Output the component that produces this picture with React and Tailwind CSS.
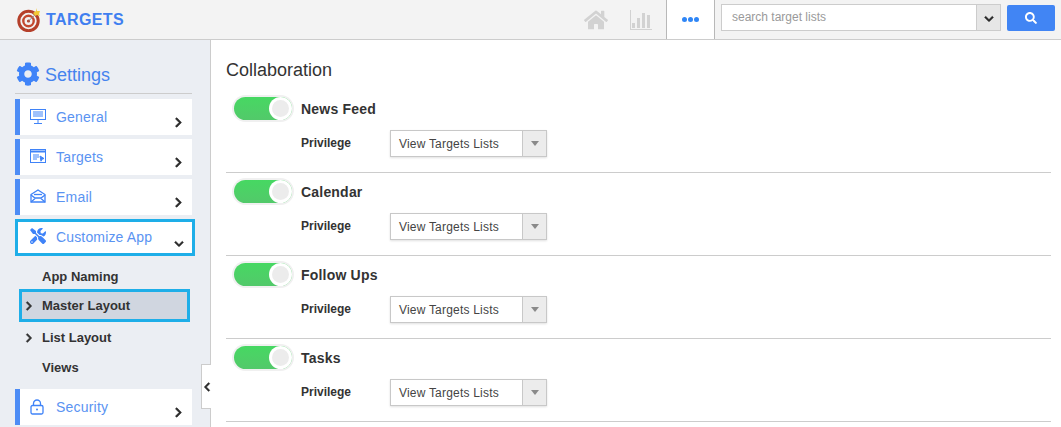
import { FaChevronRight, FaChevronDown, FaChevronLeft, FaCog, FaHome, FaTools, FaSearch } from 'react-icons/fa'

const FONT = 'font-["Liberation_Sans",Arial,sans-serif]'

function TargetLogo() {
  return (
    <svg width="24" height="24" viewBox="0 0 24 24" className="shrink-0">
      <circle cx="11.5" cy="13" r="9.7" fill="none" stroke="#b5402a" strokeWidth="3" />
      <circle cx="11.5" cy="13" r="5.2" fill="none" stroke="#c4492f" strokeWidth="2.4" />
      <circle cx="11.5" cy="13" r="1.6" fill="#b5402a" />
      <path d="M11.5 13 L20 5" stroke="#8a8a8a" strokeWidth="1" />
      <path d="M19 0 l1 3 3 0 -1 3 1 2 -3 -1 -2 1 -1 -2 -1 -1 3 -2z" fill="#f2c936" />
    </svg>
  )
}

function BarsIcon() {
  return (
    <svg width="22" height="20" viewBox="0 0 22 20" fill="#d2d2d2">
      <path d="M0 0h1v19h21v1H0z" />
      <rect x="2" y="13" width="3" height="5" />
      <rect x="7" y="8" width="3" height="10" />
      <rect x="12" y="3" width="3" height="15" />
      <rect x="17" y="5" width="3" height="13" />
    </svg>
  )
}

function MonitorIcon() {
  return (
    <svg width="16" height="16" viewBox="0 0 16 16" fill="none" stroke="#3f83f8">
      <rect x="0.5" y="0.5" width="15" height="10" />
      <path d="M3 3h10M3 5h10M3 7h10M8 11v3M4 14.5h8" />
    </svg>
  )
}

function TargetsIcon() {
  return (
    <svg width="16" height="14" viewBox="0 0 16 14" fill="none" stroke="#3f83f8">
      <rect x="0.5" y="0.5" width="15" height="13" />
      <path d="M0 2.5h16" strokeWidth="2" />
      <path d="M3 6h6M3 8h6M3 10h4" />
      <path d="M10 7l4 2.5-2 .7-1 2z" fill="#3f83f8" />
    </svg>
  )
}

function EnvelopeIcon() {
  return (
    <svg width="16" height="14" viewBox="0 0 16 14" fill="none" stroke="#3f83f8" strokeWidth="1.3">
      <path d="M1 5.5L8 1l7 4.5v7.5H1z" />
      <path d="M1 6l4 3h6l4-3M1 13l4-3.5M15 13l-4-3.5" />
      <path d="M4 5.5h8" />
    </svg>
  )
}

function LockIcon() {
  return (
    <svg width="14" height="16" viewBox="0 0 14 16" fill="none" stroke="#3f83f8" strokeWidth="1.3">
      <rect x="1" y="6.5" width="12" height="8.5" rx="1.5" />
      <path d="M3.5 6.5V4.5a3.5 3.5 0 0 1 7 0v2" />
      <circle cx="7" cy="10.5" r="1" fill="#3f83f8" stroke="none" />
    </svg>
  )
}

function SideCard({ icon, label }) {
  return (
    <div className="flex h-[36px] w-[177px] border-l-[5px] border-[#4d8cf5] bg-white pl-[10px]">
      <div className="flex w-[26px] justify-start pt-[10px]">{icon}</div>
      <span className="pt-[9px] text-[14px] leading-[18px] tracking-[0.2px] text-[#5a93f2]">{label}</span>
      <FaChevronRight size={11} stroke="currentColor" strokeWidth={30} className="ml-auto mr-[8px] mt-[18px] text-[#2b2b2b]" />
    </div>
  )
}

function Toggle() {
  return (
    <div className="flex h-[27px] w-[62px] items-center rounded-full bg-[#f0f0f0] p-[2px]">
      <div className="flex h-[23px] w-[58px] items-center justify-end rounded-full bg-gradient-to-b from-[#46d862] to-[#52c96a]">
        <div className="flex h-[23px] w-[23px] items-center justify-center rounded-full bg-white">
          <div className="h-[17px] w-[17px] rounded-full bg-[#ececec]" />
        </div>
      </div>
    </div>
  )
}

function Row({ title }) {
  return (
    <div className="h-[83px] w-[825px] border-b border-[#cccccc] pl-[6px]">
      <div className="flex items-center pt-[5px]">
        <Toggle />
        <span className="ml-[7px] pt-[2px] text-[14px] font-bold tracking-[0.2px] text-[#333333]">{title}</span>
      </div>
      <div className="mt-[8px] flex items-center">
        <span className="ml-[69px] w-[89px] pb-[2px] text-[12px] font-bold text-[#333333]">Privilege</span>
        <div className="flex h-[27px] w-[157px] border border-[#c8c8c8] bg-white shadow-[0_1px_2px_rgba(0,0,0,0.12)]">
          <span className="flex-1 pl-[8px] text-[12px] leading-[26px] tracking-[0.2px] text-[#444444]">View Targets Lists</span>
          <div className="flex w-[24px] items-center justify-center border-l border-[#c8c8c8] bg-[#ececec]">
            <div className="h-0 w-0 border-x-[4px] border-t-[5px] border-x-transparent border-t-[#8a8a8a]" />
          </div>
        </div>
      </div>
    </div>
  )
}

export default function App() {
  return (
    <div className={`h-[427px] w-[1061px] overflow-hidden bg-white ${FONT}`}>
      <header className="flex h-[40px] items-center border-b border-[#cccccc] bg-[#f3f3f3]">
        <div className="flex items-center pl-[17px]">
          <TargetLogo />
          <span className="ml-[5px] text-[16px] font-bold tracking-[0.4px] text-[#3f7ff0]">TARGETS</span>
        </div>
        <div className="ml-auto flex h-full items-center">
          <FaHome size={24} className="text-[#d2d2d2]" />
          <div className="ml-[22px] mr-[14px]"><BarsIcon /></div>
          <div className="flex h-full w-[49px] items-center justify-center gap-[1px] border-x border-[#b8b8b8] bg-white">
            <i className="h-[5px] w-[5px] rounded-full bg-[#2f86f6]" />
            <i className="h-[5px] w-[5px] rounded-full bg-[#2f86f6]" />
            <i className="h-[5px] w-[5px] rounded-full bg-[#2f86f6]" />
          </div>
          <div className="mb-[4px] ml-[6px] flex h-[27px] w-[280px] border border-[#cccccc] bg-white">
            <span className="flex-1 pl-[10px] text-[12px] leading-[25px] text-[#9a9a9a]">search target lists</span>
            <div className="flex w-[24px] items-center justify-center border-l border-[#cccccc] bg-[#e6e6e6]">
              <FaChevronDown size={10} stroke="currentColor" strokeWidth={30} className="mt-[3px] text-[#2b2b2b]" />
            </div>
          </div>
          <div className="mb-[4px] ml-[6px] mr-[6px] flex h-[26px] w-[48px] items-center justify-center rounded-[2px] bg-[#4185f4]">
            <FaSearch size={12} className="text-white" />
          </div>
        </div>
      </header>

      <div className="flex h-[387px]">
        <aside className="relative h-full w-[211px] shrink-0 border-r border-[#cccccc] bg-[#ebeef3] pl-[15px]">
          <div className="flex h-[54px] w-[177px] items-center border-b border-[#cccccc] pt-[14px]">
            <FaCog size={24} className="ml-[1px] text-[#3f83f8]" />
            <span className="ml-[5px] pt-[4px] text-[18px] text-[#4583ee]">Settings</span>
          </div>
          <div className="mt-[5px] flex flex-col gap-[4px]">
            <SideCard icon={<MonitorIcon />} label="General" />
            <SideCard icon={<TargetsIcon />} label="Targets" />
            <SideCard icon={<EnvelopeIcon />} label="Email" />
            <div className="flex h-[37px] w-[180px] border-[3px] border-[#1eaee8] bg-white pl-[12px]">
              <FaTools size={16} className="mt-[6px] text-[#3f83f8]" />
              <span className="pl-[10px] pt-[6px] text-[14px] leading-[18px] tracking-[0.15px] text-[#5a93f2]">Customize App</span>
              <FaChevronDown size={10} stroke="currentColor" strokeWidth={30} className="ml-auto mr-[8px] mt-[17px] text-[#2b2b2b]" />
            </div>
          </div>
          <ul className="ml-[4px] mt-[9px] text-[13px] font-bold text-[#333333]">
            <li className="h-[24px] pl-[23px] leading-[24px]">App Naming</li>
            <li className="flex h-[33px] w-[171px] items-center border-[3px] border-[#1eaee8] bg-[#d0d6e0] pl-[2px]">
              <FaChevronRight size={10} stroke="currentColor" strokeWidth={30} />
              <span className="ml-[8px]">Master Layout</span>
            </li>
            <li className="mt-[1px] flex h-[30px] items-center pl-[5px]">
              <FaChevronRight size={10} stroke="currentColor" strokeWidth={30} />
              <span className="ml-[8px]">List Layout</span>
            </li>
            <li className="h-[30px] pl-[23px] leading-[30px]">Views</li>
          </ul>
          <div className="mt-[6px]">
            <SideCard icon={<LockIcon />} label="Security" />
          </div>
          <div className="absolute right-[-1px] top-[324px] flex h-[45px] w-[10px] items-center justify-center border border-r-0 border-[#cccccc] bg-white">
            <FaChevronLeft size={10} stroke="currentColor" strokeWidth={30} className="shrink-0 text-[#2b2b2b]" />
          </div>
        </aside>

        <main className="pl-[15px]">
          <h1 className="h-[50px] pt-[18px] text-[18px] leading-[24px] text-[#333333]">Collaboration</h1>
          <Row title="News Feed" />
          <Row title="Calendar" />
          <Row title="Follow Ups" />
          <Row title="Tasks" />
        </main>
      </div>
    </div>
  )
}
